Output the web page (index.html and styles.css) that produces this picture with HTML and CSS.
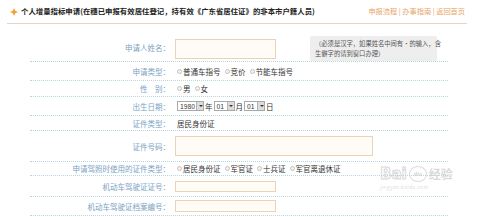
FILE: index.html
```html
<!DOCTYPE html>
<html lang="zh-CN">
<head>
<meta charset="utf-8">
<title>个人增量指标申请</title>
<link rel="stylesheet" href="styles.css">
</head>
<body>
<div class="page">
  <div class="header">
    <svg class="star" width="8" height="8" viewBox="0 0 8 8"><path d="M4 0 L5.2 2.8 L8 4 L5.2 5.2 L4 8 L2.8 5.2 L0 4 L2.8 2.8 Z" fill="#f0a035"/></svg>
    <span class="title">个人增量指标申请(在穗已申报有效居住登记，持有效《广东省居住证》的非本市户籍人员)</span>
    <span class="links">申报流程 | 办事指南 | 返回首页</span>
  </div>
  <div class="form">
    <div class="row r1">
      <div class="label">申请人姓名：</div>
      <div class="field">
        <span class="input w100 h20"></span>
        <div class="hint">（必须是汉字，如果姓名中间有·的输入，含<br>生僻字的请到窗口办理）</div>
      </div>
    </div>
    <div class="row r2">
      <div class="label">申请类型：</div>
      <div class="field opts"><span class="opt"><i class="radio"></i>普通车指号</span><span class="opt"><i class="radio"></i>竞价</span><span class="opt"><i class="radio"></i>节能车指号</span></div>
    </div>
    <div class="row r3">
      <div class="label">性　别：</div>
      <div class="field opts"><span class="opt"><i class="radio"></i>男</span><span class="opt"><i class="radio"></i>女</span></div>
    </div>
    <div class="row r4">
      <div class="label">出生日期：</div>
      <div class="field date">
        <span class="sel y"><span class="val">1980</span><span class="arr"></span></span><span class="unit">年</span>
        <span class="sel m"><span class="val">01</span><span class="arr"></span></span><span class="unit">月</span>
        <span class="sel m"><span class="val">01</span><span class="arr"></span></span><span class="unit">日</span>
      </div>
    </div>
    <div class="row r5">
      <div class="label">证件类型：</div>
      <div class="field value">居民身份证</div>
    </div>
    <div class="row r6">
      <div class="label">证件号码：</div>
      <div class="field"><span class="input w197 h20"></span></div>
    </div>
    <div class="row r7">
      <div class="label">申请驾照时使用的证件类型：</div>
      <div class="field opts"><span class="opt"><i class="radio"></i>居民身份证</span><span class="opt"><i class="radio"></i>军官证</span><span class="opt"><i class="radio"></i>士兵证</span><span class="opt"><i class="radio"></i>军官离退休证</span></div>
    </div>
    <div class="row r8">
      <div class="label">机动车驾驶证证号：</div>
      <div class="field"><span class="input w100 h10"></span></div>
    </div>
    <div class="row r9">
      <div class="label">机动车驾驶证档案编号：</div>
      <div class="field"><span class="input w100 h11"></span></div>
    </div>
  </div>
  <div class="watermark">
    <div class="wm-logo"><span class="bai">Bai</span><span class="paw">du</span><span class="jy">经验</span></div>
    <div class="wm-url">jingyan.baidu.com</div>
  </div>
</div>
</body>
</html>
```

FILE: styles.css
```css
html, body {
  margin: 0;
  padding: 0;
  background: #ffffff;
}
body {
  font-family: "Noto Sans CJK SC", "Noto Sans", sans-serif;
  font-size: 7.5px;
  color: #333333;
  line-height: 1.2;
}
.page {
  position: relative;
  width: 480px;
  height: 217px;
  overflow: hidden;
}
.header {
  display: flex;
  align-items: center;
  height: 23px;
  margin: 0 13px 0 7px;
  border-bottom: 1px solid #e6d5c2;
}
.star {
  margin-left: 3px;
  margin-right: 3px;
  flex: none;
}
.title {
  font-weight: bold;
  color: #222222;
  font-size: 7.4px;
  white-space: nowrap;
}
.links {
  margin-left: auto;
  margin-right: 2px;
  color: #e9a466;
  font-size: 7.2px;
  white-space: nowrap;
  word-spacing: 0;
}
.form {
  margin-left: 30px;
  width: 418px;
}
.row {
  display: grid;
  grid-template-columns: 140px 1fr;
  column-gap: 5px;
  align-items: center;
  border-bottom: 1px dotted #b9d5de;
  box-sizing: border-box;
}
.label {
  text-align: right;
  color: #7aa2c4;
  white-space: nowrap;
}
.field {
  display: flex;
  align-items: center;
  white-space: nowrap;
}
.r1 { height: 38px; align-items: start; padding-top: 13px; }
.r1 .label { margin-top: 6px; }
.r2 { height: 19px; }
.r3 { height: 16px; }
.r4 { height: 19px; }
.r5 { height: 15px; }
.r6 { height: 31px; }
.r7 { height: 14px; }
.r8 { height: 21px; }
.r9 { height: 19px; }
.input {
  display: block;
  box-sizing: border-box;
  border: 1px solid #ecd3b8;
  background: #fffbf6;
}
.w100 { width: 101px; }
.w197 { width: 198px; }
.h20 { height: 20px; }
.h10 { height: 11px; }
.h11 { height: 12px; }
.hint {
  margin-left: 34px;
  margin-top: -1px;
  width: 127px;
  box-sizing: border-box;
  padding: 3px 5px 2px;
  background: #eeeeee;
  border-radius: 2px;
  color: #555555;
  font-size: 6.3px;
  line-height: 1.55;
}
.opts {
  gap: 4px;
  margin-left: 2px;
}
.opt {
  display: inline-flex;
  align-items: center;
  color: #333333;
}
.radio {
  display: inline-block;
  width: 5px;
  height: 5px;
  box-sizing: border-box;
  border: 1px solid #c2c2c2;
  border-radius: 50%;
  background: #f3f3f3;
  margin-right: 1px;
}
.date {
  gap: 0;
  margin-left: 2px;
}
.sel {
  display: inline-flex;
  align-items: center;
  box-sizing: border-box;
  height: 10px;
  border: 1px solid #a9a9a9;
  background: #ffffff;
  color: #333333;
  font-size: 6.8px;
}
.sel.y { width: 27px; }
.sel.m { width: 21px; }
.val {
  flex: 1;
  padding-left: 2px;
}
.arr {
  position: relative;
  width: 7px;
  height: 8px;
  background: #dcdcdc;
  border-left: 1px solid #b5b5b5;
  box-sizing: border-box;
}
.arr::after {
  content: "";
  position: absolute;
  left: 1.5px;
  top: 3px;
  border-left: 2px solid transparent;
  border-right: 2px solid transparent;
  border-top: 2px solid #333333;
}
.unit {
  margin: 0 1px;
  color: #333333;
}
.value {
  color: #333333;
  margin-left: 2px;
}
.watermark {
  position: absolute;
  left: 380px;
  top: 165px;
  width: 85px;
  color: rgba(205, 205, 205, 0.75);
  pointer-events: none;
}
.wm-logo {
  display: flex;
  align-items: center;
  gap: 2px;
  font-family: "DejaVu Sans", sans-serif;
}
.bai {
  font-size: 15px;
  font-weight: bold;
  color: transparent;
  -webkit-text-stroke: 1px rgba(200, 200, 200, 0.7);
}
.paw {
  display: inline-flex;
  align-items: center;
  justify-content: center;
  width: 16px;
  height: 14px;
  border-radius: 50%;
  border: 1.5px solid rgba(205, 205, 205, 0.7);
  font-size: 6px;
  font-weight: bold;
}
.jy {
  font-family: "Noto Sans CJK SC", sans-serif;
  font-size: 12px;
  font-weight: bold;
}
.wm-url {
  font-size: 5px;
  margin-top: 1px;
  letter-spacing: 0.3px;
  color: rgba(205, 205, 205, 0.7);
}
```
